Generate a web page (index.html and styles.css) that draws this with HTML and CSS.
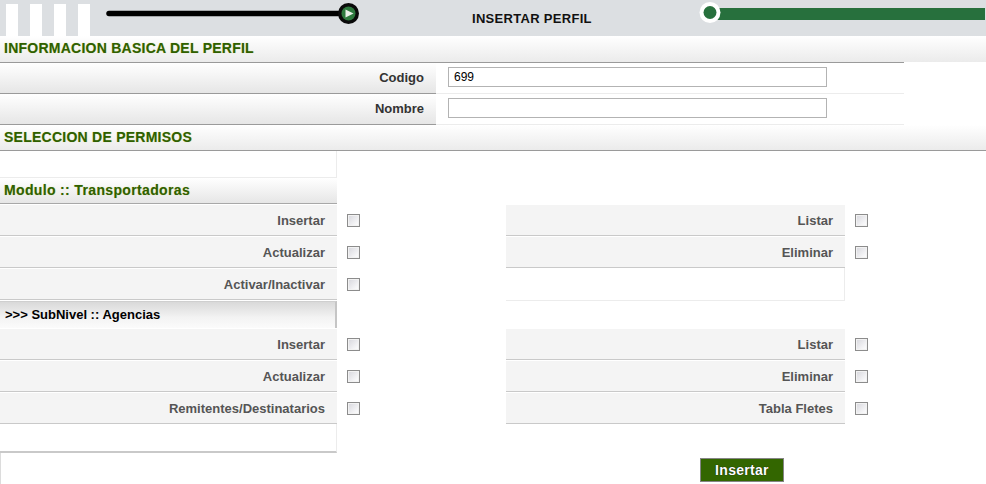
FILE: index.html
```html
<!DOCTYPE html>
<html lang="es">
<head>
<meta charset="utf-8">
<title>Insertar Perfil</title>
<link rel="stylesheet" href="styles.css">
</head>
<body>
<header class="topbar">
  <div class="stripes"><span></span><span></span><span></span><span></span></div>
  <svg class="slider-left" width="262" height="36" viewBox="0 0 262 36">
    <line x1="9" y1="13.5" x2="240" y2="13.5" stroke="#000" stroke-width="5.5" stroke-linecap="round"/>
    <circle cx="248.5" cy="13.5" r="10.5" fill="#0a0a0a"/>
    <circle cx="248.5" cy="13.5" r="7" fill="#2e7a3e"/>
    <path d="M245.5 9.5 L253.5 13.5 L245.5 17.5 Z" fill="#e8f0e8"/>
  </svg>
  <div class="title">INSERTAR PERFIL</div>
  <svg class="slider-right" width="290" height="36" viewBox="0 0 290 36">
    <rect x="14" y="8" width="276" height="12" fill="#27703d"/>
    <circle cx="15" cy="12.5" r="10.5" fill="#fff"/>
    <circle cx="15" cy="12.5" r="6.5" fill="#27703d"/>
  </svg>
</header>

<div class="section-title">INFORMACION BASICA DEL PERFIL</div>
<div class="form-table">
  <div class="form-row">
    <div class="form-label">Codigo</div>
    <div class="form-field"><input class="text-input" type="text" value="699"></div>
  </div>
  <div class="form-row">
    <div class="form-label">Nombre</div>
    <div class="form-field"><input class="text-input" type="text" value=""></div>
  </div>
</div>

<div class="section-title section-title--ruled">SELECCION DE PERMISOS</div>

<div class="perms">
  <div class="prow prow--blank"><div class="pcell-blank"></div></div>
  <div class="prow"><div class="module-title">Modulo :: Transportadoras</div></div>

  <div class="prow">
    <div class="plabel">Insertar</div><div class="pcheck"><span class="cb"></span></div>
    <div class="plabel plabel--right">Listar</div><div class="pcheck pcheck--right"><span class="cb"></span></div>
  </div>
  <div class="prow">
    <div class="plabel">Actualizar</div><div class="pcheck"><span class="cb"></span></div>
    <div class="plabel plabel--right">Eliminar</div><div class="pcheck pcheck--right"><span class="cb"></span></div>
  </div>
  <div class="prow">
    <div class="plabel">Activar/Inactivar</div><div class="pcheck"><span class="cb"></span></div>
    <div class="pempty"></div>
  </div>

  <div class="prow"><div class="sub-title">&gt;&gt;&gt; SubNivel :: Agencias</div></div>

  <div class="prow">
    <div class="plabel">Insertar</div><div class="pcheck"><span class="cb"></span></div>
    <div class="plabel plabel--right">Listar</div><div class="pcheck pcheck--right"><span class="cb"></span></div>
  </div>
  <div class="prow">
    <div class="plabel">Actualizar</div><div class="pcheck"><span class="cb"></span></div>
    <div class="plabel plabel--right">Eliminar</div><div class="pcheck pcheck--right"><span class="cb"></span></div>
  </div>
  <div class="prow">
    <div class="plabel">Remitentes/Destinatarios</div><div class="pcheck"><span class="cb"></span></div>
    <div class="plabel plabel--right">Tabla Fletes</div><div class="pcheck pcheck--right"><span class="cb"></span></div>
  </div>

  <div class="prow prow--blank2"><div class="pcell-blank2"></div></div>
  <div class="prow prow--actions">
    <div class="pcell-bottom"></div>
    <button class="btn" type="button">Insertar</button>
  </div>
</div>
</body>
</html>
```

FILE: styles.css
```css
* { box-sizing: border-box; }
html, body { margin: 0; padding: 0; background: #fff; }
body {
  font-family: "Liberation Sans", Arial, sans-serif;
  font-size: 13px;
  width: 986px;
  height: 484px;
  overflow: hidden;
}

.topbar {
  height: 36px;
  background: #dcdfe2;
  display: flex;
  align-items: flex-start;
}
.stripes {
  display: flex;
  gap: 12px;
  padding: 4px 0 0 6px;
  height: 36px;
}
.stripes span {
  display: block;
  width: 12px;
  height: 32px;
  background: #fff;
}
.slider-left { margin-left: 10px; display: block; }
.title {
  margin-left: 110px;
  margin-top: 11px;
  font-weight: bold;
  font-size: 13px;
  color: #111;
  letter-spacing: 0.3px;
  width: 128px;
  white-space: nowrap;
}
.slider-right { display: block; margin-left: 95px; }

.section-title {
  height: 26px;
  background: linear-gradient(#ffffff, #ebebeb);
  color: #2f6000;
  font-weight: bold;
  font-size: 14px;
  letter-spacing: 0.25px;
  padding: 4px 0 0 4px;
  text-shadow: 0 0 1px #c8d080;
}
.section-title--ruled { border-bottom: 1px solid #9a9a9a; }

.form-table {
  width: 904px;
  border-top: 1px solid #9a9a9a;
}
.form-row {
  display: flex;
  height: 31px;
}
.form-label {
  width: 436px;
  background: linear-gradient(#ffffff, #e6e6e6);
  border-bottom: 1px solid #9a9a9a;
  text-align: right;
  padding: 7px 12px 0 0;
  font-weight: bold;
  color: #333;
}
.form-field {
  flex: 1;
  background: #fff;
  border-bottom: 1px solid #ececec;
  padding: 4px 0 0 12px;
}
.text-input {
  display: block;
  width: 379px;
  height: 20px;
  border: 1px solid #b3b3b3;
  padding: 1px 5px;
  font-family: "Liberation Sans", Arial, sans-serif;
  font-size: 12px;
  color: #000;
  background: #fff;
}

.perms { width: 986px; }
.prow { display: flex; }

.prow--blank { height: 27px; }
.pcell-blank {
  width: 337px;
  border-right: 1px solid #ececec;
  border-bottom: 1px solid #ececec;
}
.module-title {
  width: 337px;
  height: 26px;
  background: linear-gradient(#ffffff, #e6e6e6);
  border-bottom: 1px solid #a8a8a8;
  color: #2f6000;
  font-weight: bold;
  font-size: 14px;
  letter-spacing: 0.35px;
  padding: 4px 0 0 4px;
  text-shadow: 0 0 1px #c8d080;
}

.plabel {
  width: 337px;
  height: 32px;
  background: #f4f4f4;
  border-bottom: 1px solid #c9c9c9;
  border-top: 1px solid #fff;
  text-align: right;
  padding: 8px 12px 0 0;
  font-weight: bold;
  color: #555;
}
.plabel--right { width: 339px; }
.pcheck {
  width: 169px;
  height: 32px;
  padding: 10px 0 0 10px;
}
.pcheck--right { width: 141px; padding-left: 10px; }
.pempty {
  width: 339px;
  height: 33px;
  border-right: 1px solid #ececec;
  border-bottom: 1px solid #ececec;
}
.cb {
  display: block;
  width: 13px;
  height: 13px;
  border: 1px solid #8c8c8c;
  background: linear-gradient(135deg, #d6d6dc 0%, #f4f4f6 70%, #fff 100%);
  box-shadow: inset 0 0 0 1px #f2f2f2;
}

.sub-title {
  width: 337px;
  height: 27px;
  background: linear-gradient(#d9d9d9, #f3f3f3 60%, #fbfbfb);
  border-top: 1px solid #cfcfcf;
  border-right: 2px solid #c5c5c5;
  color: #000;
  font-weight: bold;
  padding: 5px 0 0 5px;
}

.prow--blank2 { height: 29px; }
.pcell-blank2 {
  width: 337px;
  border-right: 1px solid #ececec;
  border-bottom: 2px solid #c9c9c9;
}
.prow--actions { height: 33px; align-items: flex-start; }
.pcell-bottom {
  width: 337px;
  height: 33px;
  border-left: 1px solid #dcdcdc;
}
.btn {
  margin: 5px 0 0 363px;
  width: 84px;
  height: 24px;
  background: #336600;
  border: 1px solid #858585;
  color: #fff;
  font-family: "Liberation Sans", Arial, sans-serif;
  font-weight: bold;
  font-size: 14px;
  letter-spacing: 0.3px;
  padding: 0;
  text-shadow: 0 0 1px #000;
}
```
